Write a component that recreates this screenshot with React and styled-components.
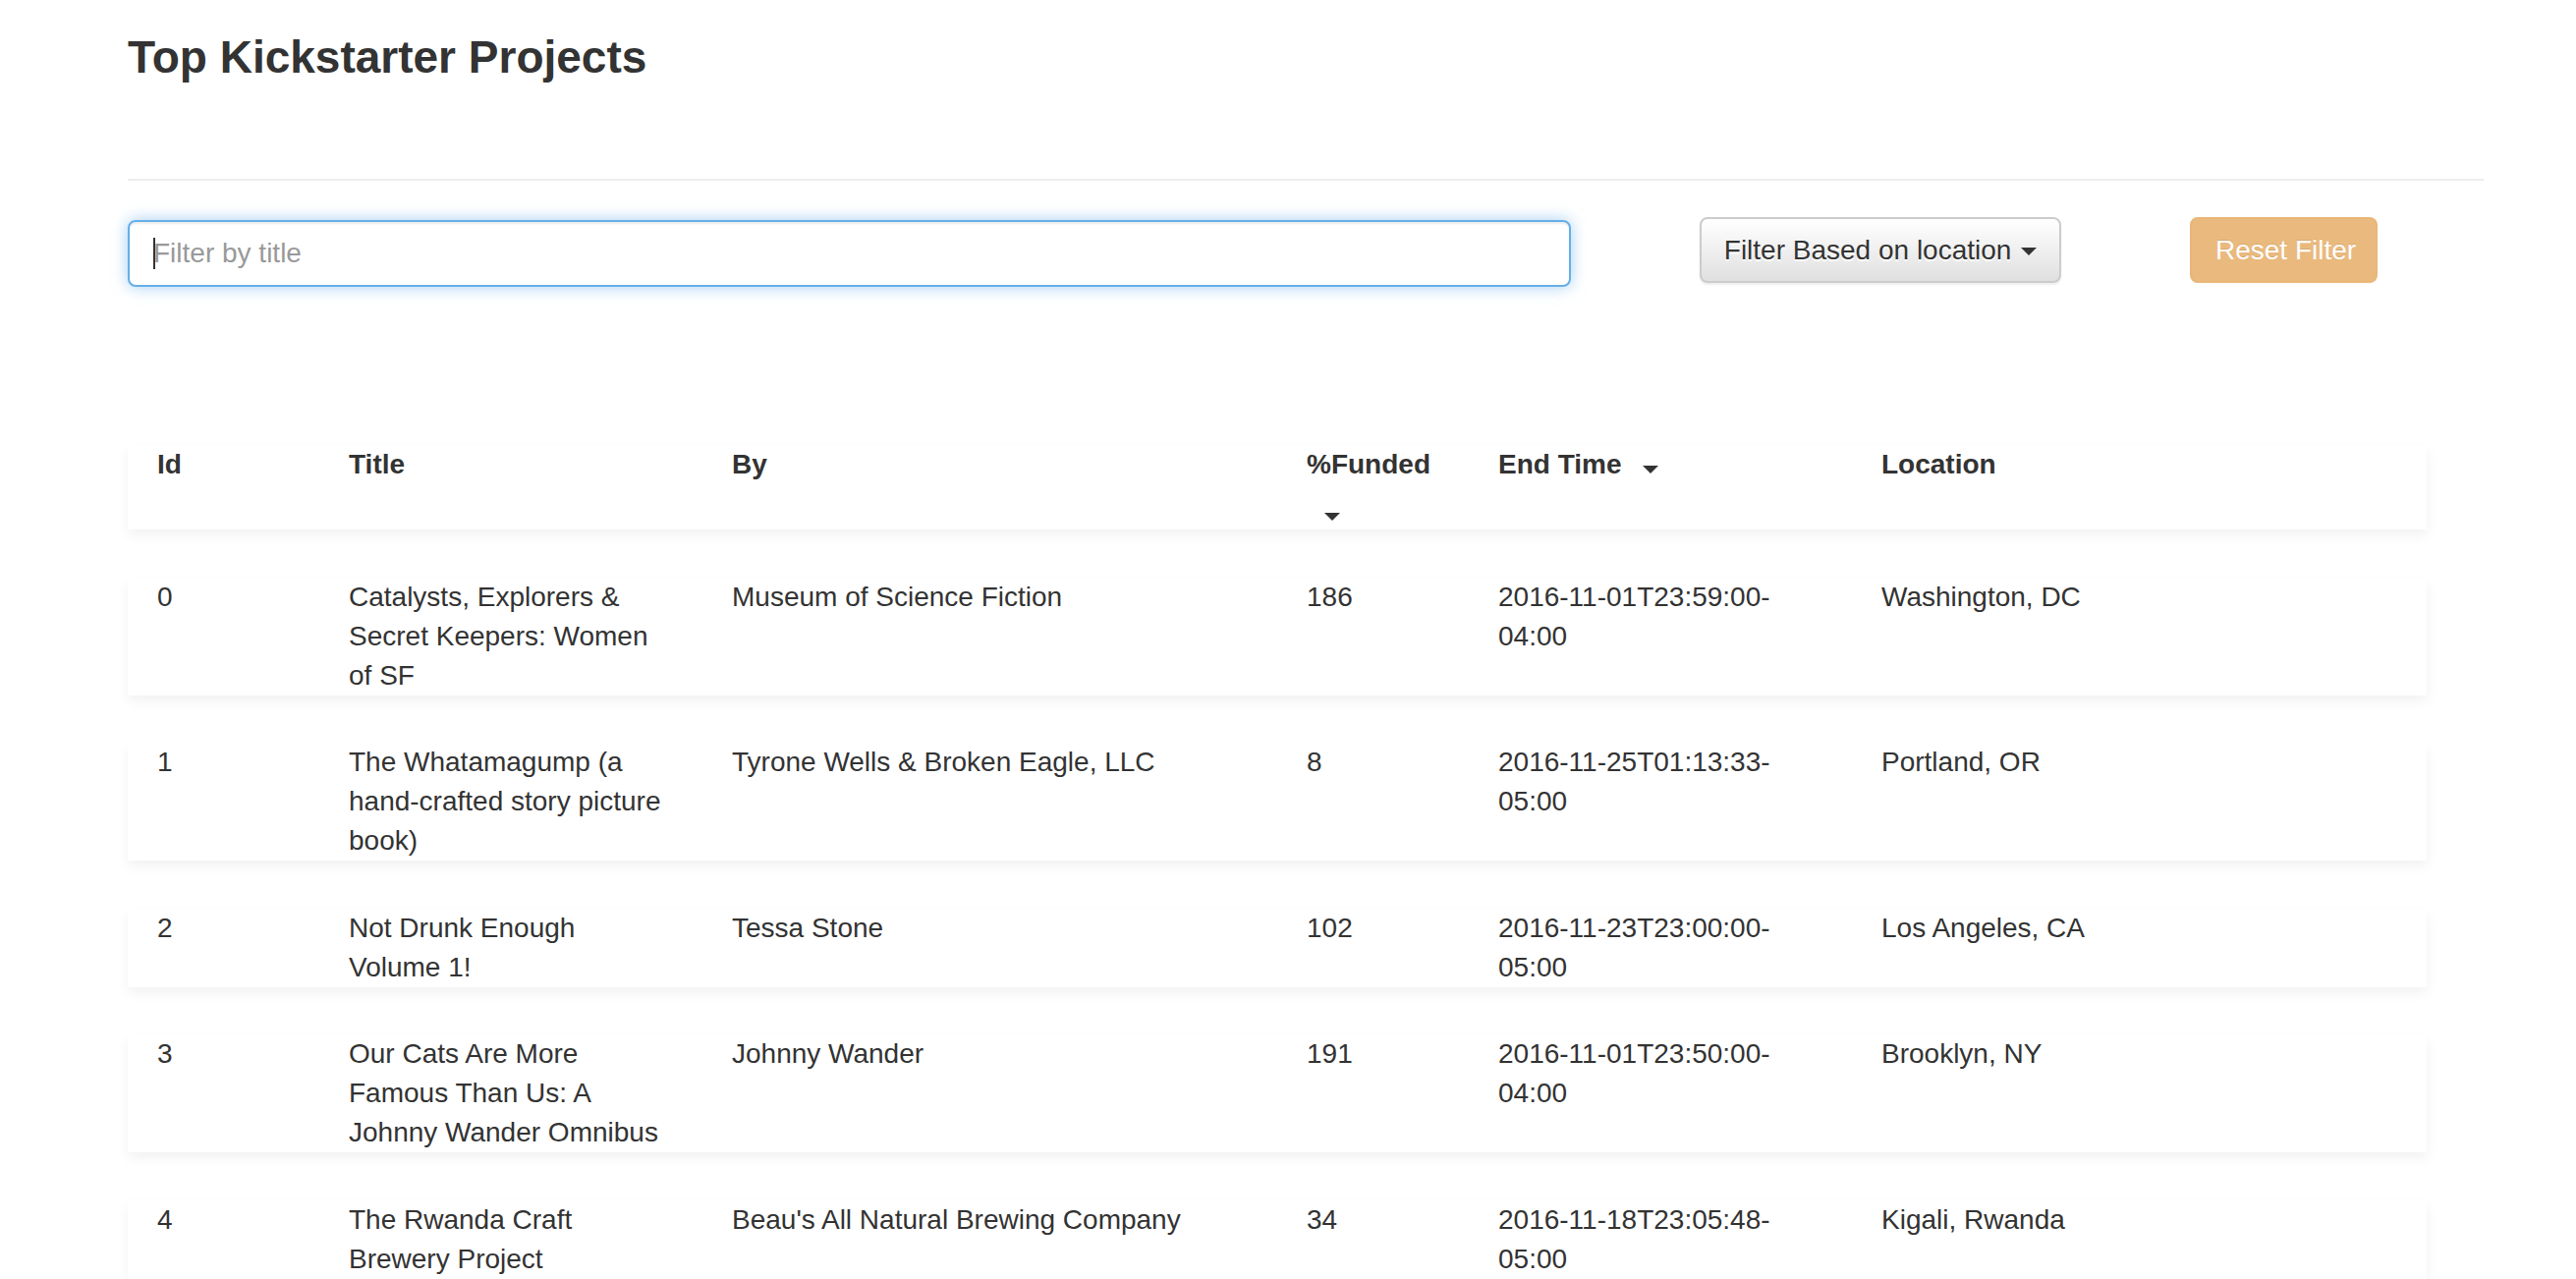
import React from "react";
import styled, { createGlobalStyle } from "styled-components";

const projects = [
  {
    id: 0,
    title: "Catalysts, Explorers & Secret Keepers: Women of SF",
    by: "Museum of Science Fiction",
    funded: 186,
    endTime: "2016-11-01T23:59:00-04:00",
    location: "Washington, DC",
  },
  {
    id: 1,
    title: "The Whatamagump (a hand-crafted story picture book)",
    by: "Tyrone Wells & Broken Eagle, LLC",
    funded: 8,
    endTime: "2016-11-25T01:13:33-05:00",
    location: "Portland, OR",
  },
  {
    id: 2,
    title: "Not Drunk Enough Volume 1!",
    by: "Tessa Stone",
    funded: 102,
    endTime: "2016-11-23T23:00:00-05:00",
    location: "Los Angeles, CA",
  },
  {
    id: 3,
    title: "Our Cats Are More Famous Than Us: A Johnny Wander Omnibus",
    by: "Johnny Wander",
    funded: 191,
    endTime: "2016-11-01T23:50:00-04:00",
    location: "Brooklyn, NY",
  },
  {
    id: 4,
    title: "The Rwanda Craft Brewery Project",
    by: "Beau's All Natural Brewing Company",
    funded: 34,
    endTime: "2016-11-18T23:05:48-05:00",
    location: "Kigali, Rwanda",
  },
];

const App = () => {
  return (
    <>
      <GlobalStyle />
      <Page>
        <Title>Top Kickstarter Projects</Title>
        <Divider />

        <Controls>
          <SearchField>
            <SearchInput type="text" placeholder="Filter by title" />
            <TextCursor />
          </SearchField>
          <DropdownButton type="button">
            Filter Based on location <ButtonCaret />
          </DropdownButton>
          <ResetButton type="button" disabled>
            Reset Filter
          </ResetButton>
        </Controls>

        <Table>
          <Row $head>
            <Cell $head>Id</Cell>
            <Cell $head>Title</Cell>
            <Cell $head>By</Cell>
            <Cell $head>
              %Funded
              <SortCaret $block />
            </Cell>
            <Cell $head>
              End Time <SortCaret />
            </Cell>
            <Cell $head>Location</Cell>
          </Row>

          {projects.map((p) => (
            <Row key={p.id}>
              <Cell>{p.id}</Cell>
              <Cell>{p.title}</Cell>
              <Cell>{p.by}</Cell>
              <Cell>{p.funded}</Cell>
              <Cell>
                {p.endTime.slice(0, 20)}
                <wbr />
                {p.endTime.slice(20)}
              </Cell>
              <Cell>{p.location}</Cell>
            </Row>
          ))}
        </Table>
      </Page>
    </>
  );
};

const GlobalStyle = createGlobalStyle`
  * {
    box-sizing: border-box;
  }

  html,
  body {
    margin: 0;
    padding: 0;
    background: #fff;
    overflow: hidden;
  }

  body {
    font-family: "Liberation Sans", Arial, sans-serif;
    font-size: 28px;
    line-height: 40px;
    color: #333;
  }
`;

const Page = styled.div`
  padding: 0 94px 0 130px;
`;

const Title = styled.h3`
  margin: 32px 0 0;
  font-size: 46px;
  line-height: 53px;
  font-weight: bold;
  color: #333;
`;

const Divider = styled.hr`
  margin: 97px 0 0;
  height: 2px;
  border: 0;
  background: #eee;
`;

const Controls = styled.div`
  display: grid;
  grid-template-columns: 1469px 368px 191px;
  column-gap: 131px;
  align-items: start;
  margin-top: 37px;
`;

const SearchField = styled.div`
  position: relative;
  margin-top: 3px;
`;

const SearchInput = styled.input`
  display: block;
  width: 100%;
  height: 68px;
  padding: 12px 24px;
  font-family: inherit;
  font-size: 28px;
  line-height: 40px;
  color: #555;
  background: #fff;
  border: 2px solid #66afe9;
  border-radius: 8px;
  outline: none;
  box-shadow: inset 0 2px 2px rgba(0, 0, 0, 0.075),
    0 0 16px rgba(102, 175, 233, 0.6);

  &::placeholder {
    color: #999;
  }
`;

const TextCursor = styled.span`
  position: absolute;
  left: 26px;
  top: 18px;
  width: 2px;
  height: 32px;
  background: #333;
`;

const DropdownButton = styled.button`
  height: 67px;
  padding: 0 22px;
  font-family: inherit;
  font-size: 28px;
  line-height: 40px;
  color: #333;
  white-space: nowrap;
  border: 2px solid #ccc;
  border-radius: 8px;
  background-image: linear-gradient(to bottom, #fff 0%, #e0e0e0 100%);
  text-shadow: 0 2px 0 #fff;
  box-shadow: inset 0 2px 0 rgba(255, 255, 255, 0.15),
    0 2px 2px rgba(0, 0, 0, 0.075);
  cursor: pointer;
`;

const ButtonCaret = styled.span`
  display: inline-block;
  width: 0;
  height: 0;
  margin-left: 2px;
  vertical-align: middle;
  border-top: 8px solid #333;
  border-left: 8px solid transparent;
  border-right: 8px solid transparent;
`;

const ResetButton = styled.button`
  height: 67px;
  padding: 0 24px;
  font-family: inherit;
  font-size: 28px;
  line-height: 40px;
  color: #fff;
  white-space: nowrap;
  background: #eab97d;
  border: 2px solid #e9b678;
  border-radius: 8px;
  text-shadow: 0 -1px 0 rgba(0, 0, 0, 0.1);
`;

const Table = styled.div`
  display: flex;
  flex-direction: column;
  gap: 48.6px;
  width: 2340px;
  margin-top: 161px;
`;

const Row = styled.div`
  display: grid;
  grid-template-columns: 1fr 2fr 3fr 1fr 2fr 3fr;
  padding-bottom: ${(p) => (p.$head ? "9px" : "0")};
  background: #fff;
  box-shadow: 0 6px 12px rgba(0, 0, 0, 0.055);
`;

const Cell = styled.div`
  padding: 0 30px;
  font-weight: ${(p) => (p.$head ? "bold" : "normal")};
  color: #333;
`;

const SortCaret = styled.span`
  display: ${(p) => (p.$block ? "block" : "inline-block")};
  width: 0;
  height: 0;
  margin: ${(p) => (p.$block ? "29px 0 0 18px" : "0 0 0 14px")};
  vertical-align: baseline;
  border-top: 8px solid #333;
  border-left: 8px solid transparent;
  border-right: 8px solid transparent;
`;

export default App;
